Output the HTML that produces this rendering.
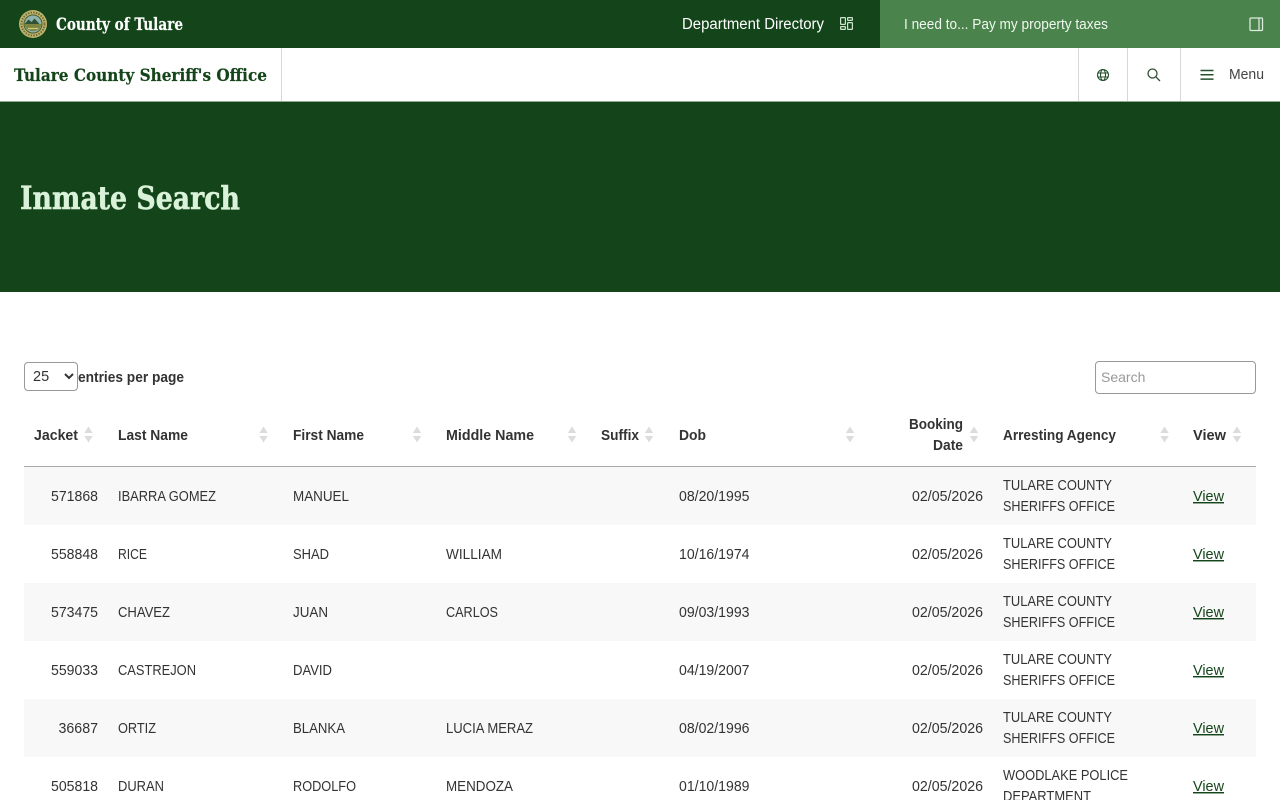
<!DOCTYPE html>
<html lang="en"><head><meta charset="utf-8"><title>Inmate Search</title>
<style>
html,body{margin:0;padding:0;width:1280px;height:800px;overflow:hidden;background:#fff}
svg{position:absolute;left:0;top:0;display:block}
svg text{font-family:"Liberation Sans",Arial,sans-serif;font-size:14.5px;fill:#333}
svg .s{font-family:"DejaVu Serif","Liberation Serif",serif;font-weight:700;paint-order:stroke}
svg .b{font-weight:700;fill:#333}
svg .l{fill:#14451a}
select{position:absolute;left:24px;top:362px;width:54px;height:29px;box-sizing:border-box;border:1px solid #999;border-radius:4px;background:#fff;color:#333;font:14.5px "Liberation Sans",sans-serif;padding:1px 0 0 4px;margin:0}
input{position:absolute;left:1095px;top:361px;width:161px;height:33px;box-sizing:border-box;border:1px solid #999;border-radius:4px;background:#fff;font:14px "Liberation Sans",sans-serif;padding:0 0 2px 5px;margin:0;outline:0}
input::placeholder{color:#999;opacity:1}
</style></head><body>
<svg width="1280" height="800" viewBox="0 0 1280 800" xmlns="http://www.w3.org/2000/svg">
<rect width="1280" height="48" fill="#14451a"/>
<rect x="880" width="400" height="48" fill="#4b834c"/>
<rect y="48" width="1280" height="53" fill="#fff"/>
<rect y="101" width="1280" height="1" fill="#8fa98f"/>
<rect y="102" width="1280" height="190" fill="#14451a"/>
<g fill="#d8d8d8"><rect x="281" y="48" width="1" height="53"/><rect x="1078" y="48" width="1" height="53"/><rect x="1127" y="48" width="1" height="53"/><rect x="1180" y="48" width="1" height="53"/></g>

<circle cx="33" cy="24" r="14" fill="#bfb46c"/>
<circle cx="33" cy="24" r="11.500" fill="none" stroke="#6f6f38" stroke-width="2" stroke-dasharray="1.500 1.200"/>
<circle cx="33" cy="24" r="9" fill="#8fb3b0" stroke="#4f5c2c" stroke-width="1"/>
<path d="M24.500 24l4-4.500 3 2.500 3-3.500 5 5.500z" fill="#2f5234"/>
<path d="M24.200 24h17.600a9 9 0 0 1-17.600 0z" fill="#7c8540"/>
<path d="M28 28.500h10" stroke="#d4c878" stroke-width="1.200"/>

<text class="s" x="56" y="30" style="font-size:16.500px;fill:#fff;stroke:#fff;stroke-width:.2px" textLength="127" lengthAdjust="spacingAndGlyphs">County of Tulare</text>
<text x="682" y="29" style="font-size:15.5px;fill:#fff" textLength="142" lengthAdjust="spacingAndGlyphs">Department Directory</text>
<g fill="none" stroke="#cfe3cf" stroke-width="1.200"><rect x="840.600" y="17.600" width="4.800" height="6.800" rx=".5"/><rect x="847.600" y="17.600" width="4.800" height="2.800" rx=".5"/><rect x="840.600" y="26.600" width="4.800" height="2.800" rx=".5"/><rect x="847.600" y="22.600" width="4.800" height="6.800" rx=".5"/></g>
<text x="904" y="29" style="font-size:14.500px;fill:#f0f7f0" textLength="204" lengthAdjust="spacingAndGlyphs">I need to... Pay my property taxes</text>
<g fill="none" stroke="#dcebdc" stroke-width="1.300"><rect x="1250" y="18" width="12.500" height="12.500" rx="1"/><path d="M1259 18v12.500"/></g>

<text class="s" x="14" y="81" style="font-size:17px;fill:#14451a;stroke:#14451a;stroke-width:.2px" textLength="253" lengthAdjust="spacingAndGlyphs">Tulare County Sheriff's Office</text>
<g fill="none" stroke="#24502a" stroke-width="1.100"><circle cx="1103" cy="75" r="5.500"/><ellipse cx="1103" cy="75" rx="2.500" ry="5.500"/><path d="M1097.500 73h11M1097.500 77h11"/></g>
<g fill="none" stroke="#2f4f33" stroke-width="1.300"><circle cx="1152.500" cy="73.500" r="4.500"/><path d="M1155.800 76.800l4.200 4.200"/></g>
<path d="M1200.500 70.500h13M1200.500 74.800h13M1200.500 79.100h13" fill="none" stroke="#24502a" stroke-width="1.500"/>
<text x="1229" y="79" style="font-size:14.500px;fill:#444" textLength="35" lengthAdjust="spacingAndGlyphs">Menu</text>

<text class="s" x="20" y="209" style="font-size:32px;fill:#d9f2d9;stroke:#d9f2d9;stroke-width:.5px" textLength="220" lengthAdjust="spacingAndGlyphs">Inmate Search</text>

<text class="b" x="78" y="382" textLength="106" lengthAdjust="spacingAndGlyphs">entries per page</text>

<g class="b">
<text class="b" x="34" y="440" textLength="44" lengthAdjust="spacingAndGlyphs">Jacket</text>
<text class="b" x="118" y="440" textLength="70" lengthAdjust="spacingAndGlyphs">Last Name</text>
<text class="b" x="293" y="440" textLength="71" lengthAdjust="spacingAndGlyphs">First Name</text>
<text class="b" x="446" y="440" textLength="88" lengthAdjust="spacingAndGlyphs">Middle Name</text>
<text class="b" x="601" y="440" textLength="38" lengthAdjust="spacingAndGlyphs">Suffix</text>
<text class="b" x="679" y="440" textLength="27" lengthAdjust="spacingAndGlyphs">Dob</text>
<text class="b" x="909" y="429" textLength="54" lengthAdjust="spacingAndGlyphs">Booking</text>
<text class="b" x="933" y="450" textLength="30" lengthAdjust="spacingAndGlyphs">Date</text>
<text class="b" x="1003" y="440" textLength="113" lengthAdjust="spacingAndGlyphs">Arresting Agency</text>
<text class="b" x="1193" y="440" textLength="33" lengthAdjust="spacingAndGlyphs">View</text>
</g>
<g fill="#dcdcdc">
<path d="M88.500 426.500l4.200 6.500h-8.400zM88.500 442.500l4.200-6.500h-8.400z"/>
<path d="M263.500 426.500l4.200 6.500h-8.400zM263.500 442.500l4.200-6.500h-8.400z"/>
<path d="M417 426.500l4.200 6.500h-8.400zM417 442.500l4.200-6.500h-8.400z"/>
<path d="M572 426.500l4.200 6.500h-8.400zM572 442.500l4.200-6.500h-8.400z"/>
<path d="M649 426.500l4.200 6.500h-8.400zM649 442.500l4.200-6.500h-8.400z"/>
<path d="M850 426.500l4.200 6.500h-8.400zM850 442.500l4.200-6.500h-8.400z"/>
<path d="M974 426.500l4.200 6.500h-8.400zM974 442.500l4.200-6.500h-8.400z"/>
<path d="M1164.500 426.500l4.200 6.500h-8.400zM1164.500 442.500l4.200-6.500h-8.400z"/>
<path d="M1237 426.500l4.200 6.500h-8.400zM1237 442.500l4.200-6.500h-8.400z"/>
</g>
<rect x="24" y="466" width="1232" height="1" fill="#a8a8a8"/>
<rect x="24" y="467" width="1232" height="58" fill="#f8f8f8"/>
<rect x="24" y="583" width="1232" height="58" fill="#f8f8f8"/>
<rect x="24" y="699" width="1232" height="58" fill="#f8f8f8"/>

<text x="51" y="501" textLength="47" lengthAdjust="spacingAndGlyphs">571868</text>
<text x="118" y="501" textLength="98" lengthAdjust="spacingAndGlyphs">IBARRA GOMEZ</text>
<text x="293" y="501" textLength="56" lengthAdjust="spacingAndGlyphs">MANUEL</text>
<text x="679" y="501" textLength="70.500" lengthAdjust="spacingAndGlyphs">08/20/1995</text>
<text x="912" y="501" textLength="71" lengthAdjust="spacingAndGlyphs">02/05/2026</text>
<text x="1003" y="490" textLength="109" lengthAdjust="spacingAndGlyphs">TULARE COUNTY</text>
<text x="1003" y="511" textLength="112" lengthAdjust="spacingAndGlyphs">SHERIFFS OFFICE</text>
<text class="l" x="1193" y="501" text-decoration="underline" textLength="31" lengthAdjust="spacingAndGlyphs">View</text>

<text x="51" y="559" textLength="47" lengthAdjust="spacingAndGlyphs">558848</text>
<text x="118" y="559" textLength="29" lengthAdjust="spacingAndGlyphs">RICE</text>
<text x="293" y="559" textLength="36" lengthAdjust="spacingAndGlyphs">SHAD</text>
<text x="446" y="559" textLength="56" lengthAdjust="spacingAndGlyphs">WILLIAM</text>
<text x="679" y="559" textLength="70.500" lengthAdjust="spacingAndGlyphs">10/16/1974</text>
<text x="912" y="559" textLength="71" lengthAdjust="spacingAndGlyphs">02/05/2026</text>
<text x="1003" y="548" textLength="109" lengthAdjust="spacingAndGlyphs">TULARE COUNTY</text>
<text x="1003" y="569" textLength="112" lengthAdjust="spacingAndGlyphs">SHERIFFS OFFICE</text>
<text class="l" x="1193" y="559" text-decoration="underline" textLength="31" lengthAdjust="spacingAndGlyphs">View</text>

<text x="51" y="617" textLength="47" lengthAdjust="spacingAndGlyphs">573475</text>
<text x="118" y="617" textLength="52" lengthAdjust="spacingAndGlyphs">CHAVEZ</text>
<text x="293" y="617" textLength="35" lengthAdjust="spacingAndGlyphs">JUAN</text>
<text x="446" y="617" textLength="52" lengthAdjust="spacingAndGlyphs">CARLOS</text>
<text x="679" y="617" textLength="70.500" lengthAdjust="spacingAndGlyphs">09/03/1993</text>
<text x="912" y="617" textLength="71" lengthAdjust="spacingAndGlyphs">02/05/2026</text>
<text x="1003" y="606" textLength="109" lengthAdjust="spacingAndGlyphs">TULARE COUNTY</text>
<text x="1003" y="627" textLength="112" lengthAdjust="spacingAndGlyphs">SHERIFFS OFFICE</text>
<text class="l" x="1193" y="617" text-decoration="underline" textLength="31" lengthAdjust="spacingAndGlyphs">View</text>

<text x="51" y="675" textLength="47" lengthAdjust="spacingAndGlyphs">559033</text>
<text x="118" y="675" textLength="78" lengthAdjust="spacingAndGlyphs">CASTREJON</text>
<text x="293" y="675" textLength="39" lengthAdjust="spacingAndGlyphs">DAVID</text>
<text x="679" y="675" textLength="70.500" lengthAdjust="spacingAndGlyphs">04/19/2007</text>
<text x="912" y="675" textLength="71" lengthAdjust="spacingAndGlyphs">02/05/2026</text>
<text x="1003" y="664" textLength="109" lengthAdjust="spacingAndGlyphs">TULARE COUNTY</text>
<text x="1003" y="685" textLength="112" lengthAdjust="spacingAndGlyphs">SHERIFFS OFFICE</text>
<text class="l" x="1193" y="675" text-decoration="underline" textLength="31" lengthAdjust="spacingAndGlyphs">View</text>

<text x="58.500" y="733" textLength="39.500" lengthAdjust="spacingAndGlyphs">36687</text>
<text x="118" y="733" textLength="38" lengthAdjust="spacingAndGlyphs">ORTIZ</text>
<text x="293" y="733" textLength="52" lengthAdjust="spacingAndGlyphs">BLANKA</text>
<text x="446" y="733" textLength="87" lengthAdjust="spacingAndGlyphs">LUCIA MERAZ</text>
<text x="679" y="733" textLength="70.500" lengthAdjust="spacingAndGlyphs">08/02/1996</text>
<text x="912" y="733" textLength="71" lengthAdjust="spacingAndGlyphs">02/05/2026</text>
<text x="1003" y="722" textLength="109" lengthAdjust="spacingAndGlyphs">TULARE COUNTY</text>
<text x="1003" y="743" textLength="112" lengthAdjust="spacingAndGlyphs">SHERIFFS OFFICE</text>
<text class="l" x="1193" y="733" text-decoration="underline" textLength="31" lengthAdjust="spacingAndGlyphs">View</text>

<text x="51" y="791" textLength="47" lengthAdjust="spacingAndGlyphs">505818</text>
<text x="118" y="791" textLength="46" lengthAdjust="spacingAndGlyphs">DURAN</text>
<text x="293" y="791" textLength="63" lengthAdjust="spacingAndGlyphs">RODOLFO</text>
<text x="446" y="791" textLength="67" lengthAdjust="spacingAndGlyphs">MENDOZA</text>
<text x="679" y="791" textLength="70.500" lengthAdjust="spacingAndGlyphs">01/10/1989</text>
<text x="912" y="791" textLength="71" lengthAdjust="spacingAndGlyphs">02/05/2026</text>
<text x="1003" y="780" textLength="125" lengthAdjust="spacingAndGlyphs">WOODLAKE POLICE</text>
<text x="1003" y="801" textLength="88" lengthAdjust="spacingAndGlyphs">DEPARTMENT</text>
<text class="l" x="1193" y="791" text-decoration="underline" textLength="31" lengthAdjust="spacingAndGlyphs">View</text>
</svg>
<select aria-label="entries per page"><option>25</option></select>
<input type="text" placeholder="Search" aria-label="Search">
</body></html>
